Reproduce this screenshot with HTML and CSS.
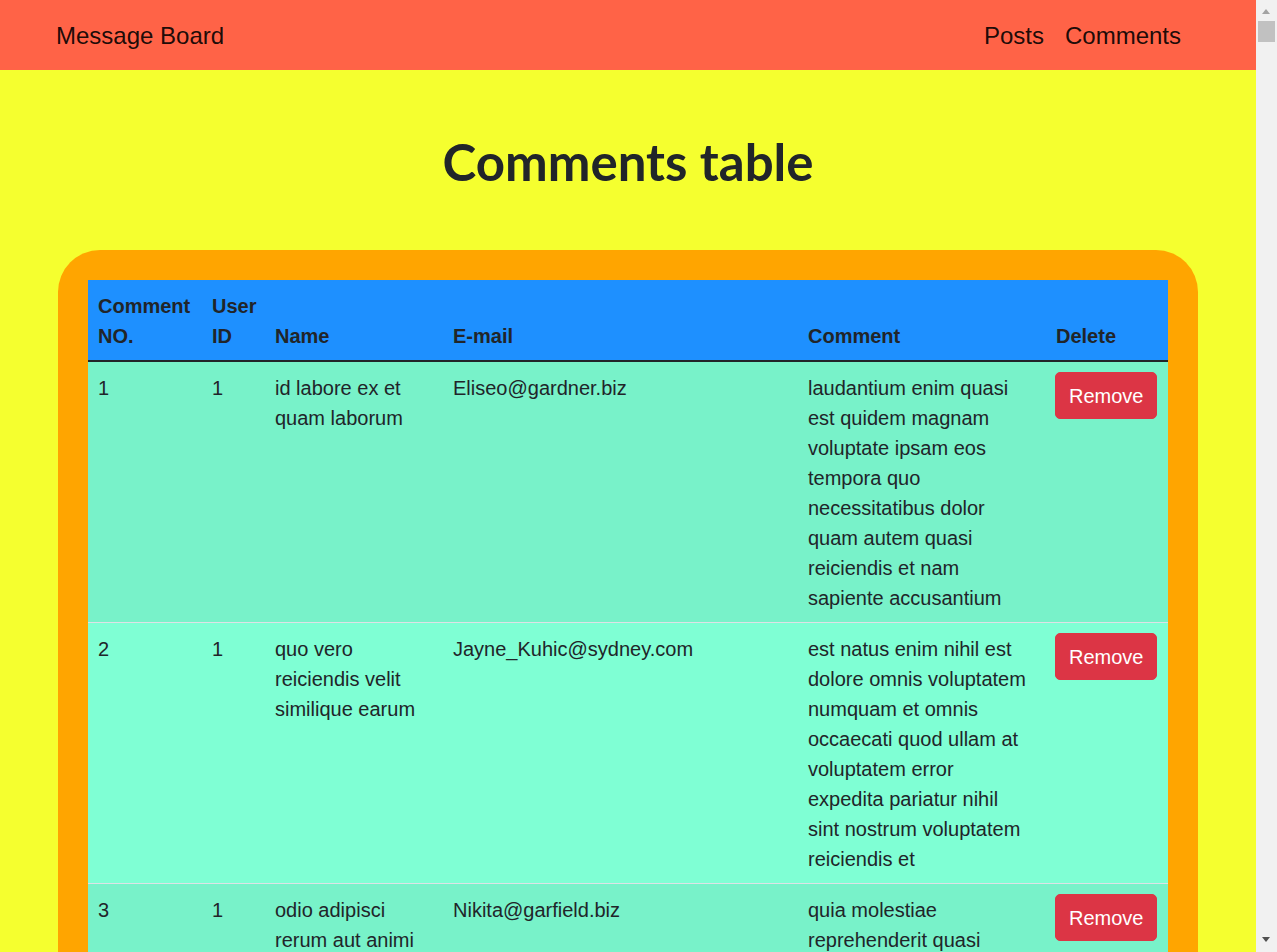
FILE: index.html
```html
<!DOCTYPE html>
<html lang="en">
<head>
<meta charset="utf-8">
<title>Message Board</title>
<link rel="stylesheet" href="styles.css">
</head>
<body>
<nav class="navbar">
  <a class="brand" href="#">Message Board</a>
  <div class="nav-links">
    <a class="nav-link" href="#">Posts</a>
    <a class="nav-link" href="#">Comments</a>
  </div>
</nav>
<main class="page">
  <h1 class="title">Comments table</h1>
  <div class="panel">
    <table class="comments">
      <colgroup>
        <col class="c-no"><col class="c-user"><col class="c-name"><col class="c-email"><col class="c-body"><col class="c-del">
      </colgroup>
      <thead>
        <tr>
          <th>Comment NO.</th>
          <th>User ID</th>
          <th>Name</th>
          <th>E-mail</th>
          <th>Comment</th>
          <th>Delete</th>
        </tr>
      </thead>
      <tbody>
        <tr>
          <td>1</td><td>1</td>
          <td>id labore ex et quam laborum</td>
          <td>Eliseo@gardner.biz</td>
          <td class="body-cell">laudantium enim quasi est quidem magnam voluptate ipsam eos tempora quo necessitatibus dolor quam autem quasi reiciendis et nam sapiente accusantium</td>
          <td><button class="btn-remove" type="button">Remove</button></td>
        </tr>
        <tr>
          <td>2</td><td>1</td>
          <td>quo vero reiciendis velit similique earum</td>
          <td>Jayne_Kuhic@sydney.com</td>
          <td class="body-cell">est natus enim nihil est dolore omnis voluptatem numquam et omnis occaecati quod ullam at voluptatem error expedita pariatur nihil sint nostrum voluptatem reiciendis et</td>
          <td><button class="btn-remove" type="button">Remove</button></td>
        </tr>
        <tr>
          <td>3</td><td>1</td>
          <td>odio adipisci rerum aut animi</td>
          <td>Nikita@garfield.biz</td>
          <td class="body-cell">quia molestiae reprehenderit quasi aspernatur aut expedita occaecati aliquam eveniet laudantium omnis quibusdam delectus saepe quia accusamus maiores nam est cum et ducimus et vero voluptates excepturi deleniti ratione</td>
          <td><button class="btn-remove" type="button">Remove</button></td>
        </tr>
        <tr>
          <td>4</td><td>1</td>
          <td>alias odio sit</td>
          <td>Lew@alysha.tv</td>
          <td class="body-cell">non et atque occaecati deserunt quas accusantium unde odit nobis qui voluptatem quia voluptas consequuntur itaque dolor et qui rerum deleniti ut occaecati</td>
          <td><button class="btn-remove" type="button">Remove</button></td>
        </tr>
        <tr>
          <td>5</td><td>1</td>
          <td>vero eaque aliquid doloribus et culpa</td>
          <td>Hayden@althea.biz</td>
          <td class="body-cell">harum non quasi et ratione tempore iure ex voluptates in ratione harum architecto fugit inventore cupiditate voluptates magni quo et</td>
          <td><button class="btn-remove" type="button">Remove</button></td>
        </tr>
      </tbody>
    </table>
  </div>
</main>
<div class="scrollbar" aria-hidden="true">
  <span class="sb-up"></span>
  <span class="sb-thumb"></span>
  <span class="sb-down"></span>
</div>
</body>
</html>
```
FILE: styles.css
```css
html {
  scrollbar-width: none;
}
html::-webkit-scrollbar {
  display: none;
}
body {
  margin: 0;
  padding-right: 21px;
  background: #f5ff2f;
  color: #212529;
  font-family: "Liberation Sans", Arial, sans-serif;
  font-size: 20px;
  line-height: 1.5;
}

/* navbar */
.navbar {
  height: 70px;
  box-sizing: border-box;
  display: flex;
  align-items: center;
  justify-content: space-between;
  padding: 2px 75px 0 56px;
  background: #ff6347;
}
.brand,
.nav-link {
  color: rgba(0, 0, 0, 0.9);
  text-decoration: none;
  font-size: 24px;
}
.nav-links {
  display: flex;
  gap: 21px;
}

/* title */
.title {
  margin: 62px 0 58px;
  text-align: center;
  font-family: "Lato", "Liberation Sans", sans-serif;
  font-weight: 700;
  font-size: 51px;
  line-height: 60px;
  color: #212529;
}

/* panel */
.panel {
  width: 1140px;
  box-sizing: border-box;
  margin: 0 auto;
  padding: 30px;
  background: #ffa500;
  border-radius: 42px;
}

.comments {
  width: 100%;
  border-collapse: collapse;
  table-layout: fixed;
  background: #7fffd4;
}
.c-no { width: 114px; }
.c-user { width: 63px; }
.c-name { width: 178px; }
.c-email { width: 355px; }
.c-body { width: 248px; }
.c-del { width: 122px; }

.comments th,
.comments td {
  padding: 11px 10px 9px;
  text-align: left;
  vertical-align: top;
  border-top: 1px solid #dee2e6;
}
.comments thead th {
  vertical-align: bottom;
  border-top: 0;
  border-bottom: 2px solid #212529;
  background: #1e90ff;
  font-weight: 700;
}
.comments tbody tr:nth-child(odd) {
  background: rgba(0, 0, 0, 0.05);
}
.comments .body-cell {
  padding-right: 16px;
}
.comments .btn-cell {
  padding-top: 10px;
}

.btn-remove {
  display: inline-block;
  margin-top: -1px;
  margin-left: -1px;
  padding: 7.5px 13px 7.5px 13px;
  border: 1px solid #dc3545;
  border-radius: 5px;
  background: #dc3545;
  color: #fff;
  font-family: inherit;
  font-size: 20px;
  line-height: 1.5;
  cursor: pointer;
}

/* fake window scrollbar */
.scrollbar {
  position: fixed;
  top: 0;
  right: 0;
  width: 21px;
  height: 100vh;
  background: #f1f1f1;
}
.sb-up,
.sb-down,
.sb-thumb {
  position: absolute;
  display: block;
}
.sb-up {
  top: 9px;
  left: 6px;
  width: 0;
  height: 0;
  border-left: 4.5px solid transparent;
  border-right: 4.5px solid transparent;
  border-bottom: 5px solid #a3a3a3;
}
.sb-down {
  bottom: 10px;
  left: 6px;
  width: 0;
  height: 0;
  border-left: 4.5px solid transparent;
  border-right: 4.5px solid transparent;
  border-top: 5px solid #505050;
}
.sb-thumb {
  top: 21px;
  left: 2px;
  width: 17px;
  height: 21px;
  background: #c1c1c1;
}
```
